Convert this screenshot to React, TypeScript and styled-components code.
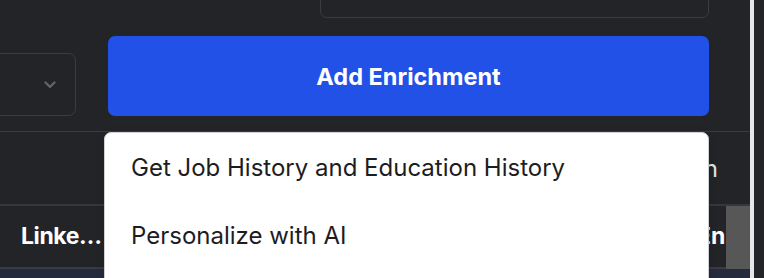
import React from 'react';
import styled, { createGlobalStyle } from 'styled-components';

const GlobalStyle = createGlobalStyle`
    html, body {
        margin: 0;
        padding: 0;
        background: #232428;
        overflow: hidden;
    }
    * {
        box-sizing: border-box;
    }
`;

const enrichments = [
    'Get Job History and Education History',
    'Personalize with AI',
    'Find Work Email',
];

const columns = [
    { label: 'LinkedIn URL', width: 104 },
    { label: 'Full Name', width: 300 },
    { label: 'Company', width: 289 },
];

const App: React.FC = () => {
    return (
        <>
            <GlobalStyle />
            <Page>
                <Panel>
                    <TopSection>
                        <InputRow>
                            <SearchInput />
                        </InputRow>
                        <ActionRow>
                            <Select>
                                <svg width="12" height="8" viewBox="0 0 12 8">
                                    <path
                                        d="M1.5 1.5 L6 5.8 L10.5 1.5"
                                        fill="none"
                                        stroke="#626368"
                                        strokeWidth="2.4"
                                        strokeLinecap="round"
                                        strokeLinejoin="round"
                                    />
                                </svg>
                            </Select>
                            <AddButton>Add Enrichment</AddButton>
                        </ActionRow>
                    </TopSection>

                    <FilterRow>
                        <FilterText>Search</FilterText>
                    </FilterRow>

                    <HeadRow>
                        {columns.map((col, i) => (
                            <HeadCell key={col.label} $width={col.width} $first={i === 0}>
                                {col.label}
                            </HeadCell>
                        ))}
                        <HeadCell $grow>Enrichment</HeadCell>
                        <ScrollCell />
                    </HeadRow>
                    <BodyRow />

                    <Menu>
                        {enrichments.map((item) => (
                            <MenuItem key={item}>{item}</MenuItem>
                        ))}
                    </Menu>
                </Panel>
                <Divider />
                <Gutter />
            </Page>
        </>
    );
};

export default App;

const Page = styled.div`
    display: flex;
    width: 764px;
    height: 278px;
    overflow: hidden;
    font-family: Inter, 'Liberation Sans', sans-serif;
`;

const Panel = styled.div`
    position: relative;
    width: 750px;
    flex-shrink: 0;
    display: flex;
    flex-direction: column;
`;

const Divider = styled.div`
    width: 4px;
    background: #e7e7e9;
`;

const Gutter = styled.div`
    flex: 1;
    background: #232428;
`;

const TopSection = styled.div`
    display: flex;
    flex-direction: column;
    gap: 18px;
    padding: 0 41px 15px 0;
    margin-top: -22px;
    border-bottom: 1px solid #3a3b40;
`;

const InputRow = styled.div`
    display: flex;
    justify-content: flex-end;
`;

const SearchInput = styled.div`
    width: 389px;
    height: 40px;
    border: 1.5px solid #3b3c41;
    border-radius: 7px;
`;

const ActionRow = styled.div`
    display: flex;
    align-items: flex-end;
    gap: 32px;
    margin-left: -40px;
`;

const Select = styled.div`
    width: 116px;
    height: 63px;
    border: 1.5px solid #3b3c41;
    border-radius: 7px;
    display: flex;
    align-items: center;
    justify-content: flex-end;
    padding-right: 19px;
`;

const AddButton = styled.button`
    flex: 1;
    height: 80px;
    border: none;
    border-radius: 7px;
    background: #2251e7;
    color: #ffffff;
    font-family: Inter, 'Liberation Sans', sans-serif;
    font-size: 23.5px;
    font-weight: 700;
    cursor: pointer;
`;

const FilterRow = styled.div`
    height: 74px;
    display: flex;
    align-items: center;
    justify-content: flex-end;
    padding-right: 32px;
    border-bottom: 2px solid #36373c;
`;

const FilterText = styled.span`
    color: #e4e4e6;
    font-size: 24px;
`;

const HeadRow = styled.div`
    height: 63px;
    display: flex;
    border-bottom: 2px solid #3a3b40;
`;

const HeadCell = styled.div<{ $width?: number; $grow?: boolean; $first?: boolean }>`
    ${({ $width }) => ($width ? `width: ${$width}px; flex-shrink: 0;` : '')}
    ${({ $grow }) => ($grow ? 'flex: 1;' : '')}
    display: block;
    line-height: 61px;
    padding: ${({ $first }) => ($first ? '0 0 0 21px' : '0 0 0 4px')};
    color: #ffffff;
    font-size: 23px;
    font-weight: 700;
    letter-spacing: ${({ $first }) => ($first ? '-0.4px' : '0')};
    white-space: nowrap;
    overflow: hidden;
    text-overflow: ${({ $grow }) => ($grow ? 'clip' : 'ellipsis')};
    min-width: 0;
`;

const ScrollCell = styled.div`
    width: 24px;
    flex-shrink: 0;
    background: #575757;
    margin-bottom: -12px;
`;

const BodyRow = styled.div`
    flex: 1;
    background: #262a3d;
`;

const Menu = styled.ul`
    position: absolute;
    top: 132px;
    left: 104px;
    width: 605px;
    margin: 0;
    padding: 0;
    list-style: none;
    background: #ffffff;
    border: 1.5px solid #cfd0d4;
    border-radius: 7px;
    box-shadow: 0 2px 8px rgba(0, 0, 0, 0.15);
`;

const MenuItem = styled.li`
    height: 68px;
    display: flex;
    align-items: center;
    padding-left: 26px;
    color: #1d1d1f;
    font-size: 24px;
    font-weight: 400;
`;
